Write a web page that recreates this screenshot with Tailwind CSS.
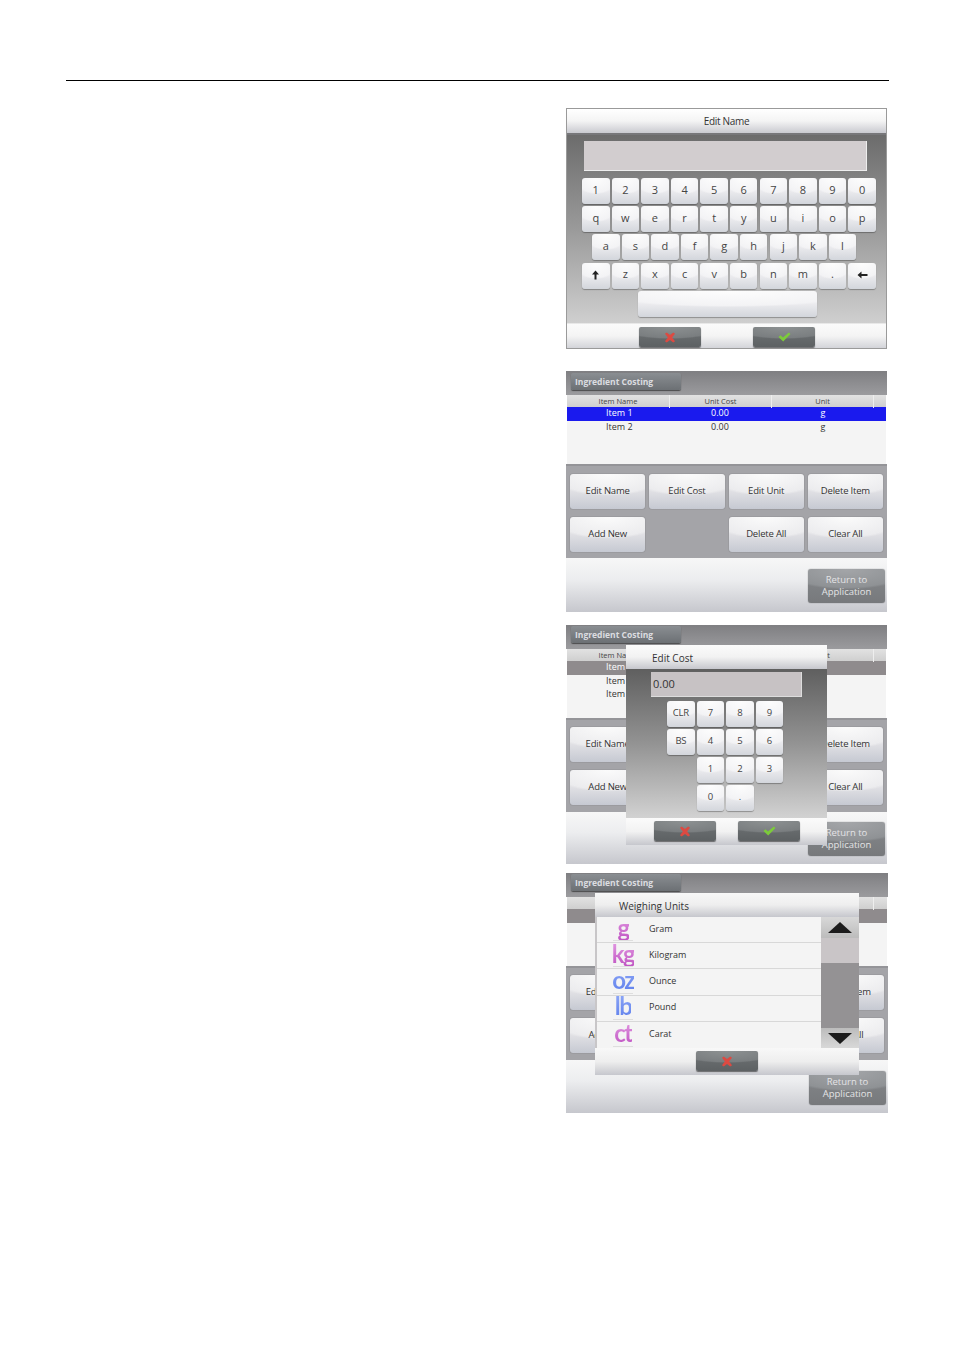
<!DOCTYPE html>
<html lang="en">
<head>
    <meta charset="UTF-8">
    <title>Ingredient Costing</title>
    <script src="https://cdn.jsdelivr.net/npm/@tailwindcss/browser@4"></script>
</head>
<body class="bg-white font-['Open_Sans',sans-serif] text-[#333]">
    <div class="pt-20 h-[1350px] overflow-hidden">
        <div class="ml-[66px] w-[823px] border-t border-black"></div>
        <div class="ml-[566px] w-[321px] mt-[27px] flex flex-col">

            <!-- Edit Name keyboard -->
            <section class="h-[241px] flex flex-col border border-[#9a9a9a]">
                <div class="h-[26px] pt-px flex items-center justify-center text-[10px] tracking-[-0.3px] bg-[linear-gradient(#ffffff,#f4f4f4_50%,#c9cad0)] border-b-2 border-[#77777a]">Edit Name</div>
                <div class="flex-1 px-[15px] pt-[6px] bg-[linear-gradient(#6c6c6c,#9a9a9a_50%,#cfcfcf)]">
                    <div class="h-[30px] mx-[2px] w-[283px] bg-[#d2cdcf] border-b border-r border-[#eeeeee]"></div>
                    <div id="kbd" class="mt-[7px] flex flex-col gap-[2.2px]"></div>
                </div>
                <div class="h-[25px] flex justify-center gap-[52px] pt-[3px] bg-[linear-gradient(#fbfbfb,#f4f4f4_50%,#d3d4d9)] border-t border-[#e8e8e8]">
                    <div class="action-x"></div>
                    <div class="action-ok"></div>
                </div>
            </section>

            <!-- Item list -->
            <section id="screen-list" class="relative mt-[22px] h-[241px]"></section>

            <!-- Edit Cost popup over the list -->
            <section id="screen-cost" class="relative mt-[13px] h-[239px]">
                <div class="absolute z-10 left-[60px] top-[20px] w-[201px] h-[200px] flex flex-col">
                    <div class="h-[24px] pl-[26px] pt-[2px] flex items-center text-[10px] bg-[linear-gradient(#fbfbfb,#f2f2f2_50%,#c6c7cd)]">Edit Cost</div>
                    <div class="flex-1 pt-[3px] bg-[linear-gradient(#5f5f5f,#939393_50%,#d2d2d2)]">
                        <div class="ml-[25px] w-[151px] h-[25px] pl-[2px] flex items-center text-[11px] bg-[#c7c2c4] border-b border-r border-[#dddddd]">0.00</div>
                        <div id="numpad" class="ml-[41px] mt-[4px] grid grid-cols-[repeat(4,27.5px)] auto-rows-[26px] gap-x-[2px] gap-y-[2px]"></div>
                    </div>
                    <div class="h-[27px] flex justify-center gap-[22px] pt-[3px] bg-[linear-gradient(#fbfbfb,#f2f2f2_50%,#c6c7cd)]">
                        <div class="action-x"></div>
                        <div class="action-ok"></div>
                    </div>
                </div>
            </section>

            <!-- Weighing Units popup over the list -->
            <section id="screen-units" class="relative mt-[9px] h-[240px] w-[322px]">
                <div class="absolute z-10 left-[29px] top-[20px] w-[264px] h-[182px] flex flex-col">
                    <div class="h-[24px] pl-[24px] pt-[2px] flex items-center text-[10px] bg-[linear-gradient(#f8f8f8,#eeeeee_50%,#c6c7cd)]">Weighing Units</div>
                    <div class="h-[131px] flex bg-[#c8c6c8]">
                        <ul id="units" class="w-[224px] ml-[2px] bg-[#f4f4f4] flex flex-col"></ul>
                        <div class="flex-1 flex flex-col bg-[#949294]">
                            <div class="h-[21px] flex items-center justify-center bg-[linear-gradient(#d8d8d8,#bcbcbc)]">
                                <div class="w-0 h-0 border-x-[12px] border-x-transparent border-b-[11px] border-b-[#1c1c1c]"></div>
                            </div>
                            <div class="h-[25px] bg-[#c9c5c7]"></div>
                            <div class="flex-1"></div>
                            <div class="h-[20px] flex items-center justify-center bg-[linear-gradient(#bcbcbc,#d8d8d8)]">
                                <div class="w-0 h-0 border-x-[12px] border-x-transparent border-t-[11px] border-t-[#1c1c1c]"></div>
                            </div>
                        </div>
                    </div>
                    <div class="flex-1 flex justify-center pt-[3px] bg-[linear-gradient(#f8f8f8,#eeeeee_50%,#c6c7cd)]">
                        <div class="action-x"></div>
                    </div>
                </div>
            </section>
        </div>
    </div>

    <script>
        const keyCls = 'shrink-0 pb-[2px] flex items-center justify-center rounded-[3px] text-[#444] bg-[radial-gradient(ellipse_80%_62%_at_50%_0,#fdfdfd,#f3f3f5_90%,transparent_100%),linear-gradient(#ebebee_50%,#d3d6dc)] shadow-[0_1px_1px_rgba(0,0,0,0.3)]';
        const btnCls = 'h-[34.5px] flex items-center justify-center rounded-[3px] text-[9.5px] tracking-[-0.2px] text-[#333] bg-[radial-gradient(ellipse_80%_62%_at_50%_0,#fbfbfb,#ececee_90%,transparent_100%),linear-gradient(#e0e0e4_50%,#c6c9d2)] shadow-[0_0_1px_rgba(0,0,0,0.5)]';
        const actionCls = 'w-[62px] h-[20px] flex items-center justify-center rounded-[2px] bg-[radial-gradient(ellipse_85%_60%_at_50%_0,#8d9192,#7a7e80_90%,transparent_100%),linear-gradient(#6f7375,#5d6163)] shadow-[0_1px_1px_rgba(0,0,0,0.5)]';

        const upArrow = '<svg width="9" height="10" viewBox="0 0 9 10"><path d="M4.5 0.5 L8 4.5 H5.5 V9.5 H3.5 V4.5 H1 Z" fill="#222"/></svg>';
        const backArrow = '<svg width="11" height="8" viewBox="0 0 11 8"><path d="M0.5 4 L4.5 0.5 V3 H10.5 V5 H4.5 V7.5 Z" fill="#222"/></svg>';
        const crossIcon = '<svg width="12" height="11" viewBox="0 0 13 12"><path d="M1 2 L3 0.5 L6.5 3.2 L10 0.5 L12 2 L8.8 6 L12 10 L10 11.5 L6.5 8.8 L3 11.5 L1 10 L4.2 6 Z" fill="#dc4a42"/></svg>';
        const checkIcon = '<svg class="ml-[2px]" width="13" height="10" viewBox="0 0 13 10"><path d="M0.5 5 L2.5 3.2 L5 5.4 L10.8 0.5 L12.5 2 L5.2 9.5 Z" fill="#7ccb3a"/></svg>';

        document.querySelectorAll('.action-x').forEach(el => {
            el.className = actionCls;
            el.innerHTML = crossIcon;
        });
        document.querySelectorAll('.action-ok').forEach(el => {
            el.className = actionCls;
            el.innerHTML = checkIcon;
        });

        // Keyboard rows
        const key = label => `<div class="${keyCls} text-[11px] w-[27.5px] h-[26px]">${label}</div>`;
        const rows = [
            ['1','2','3','4','5','6','7','8','9','0'],
            ['q','w','e','r','t','y','u','i','o','p'],
            ['a','s','d','f','g','h','j','k','l'],
            [upArrow,'z','x','c','v','b','n','m','.',backArrow]
        ];
        document.getElementById('kbd').innerHTML = rows.map((row, i) => `
            <div class="flex gap-[2.1px] ${i === 2 ? 'pl-[10px]' : ''}">${row.map(key).join('')}</div>
        `).join('') + `<div class="${keyCls} ml-[56px] w-[179px] h-[26px]"></div>`;

        // Numeric pad
        const pad = ['CLR','7','8','9','BS','4','5','6','','1','2','3','','0','.',''];
        document.getElementById('numpad').innerHTML = pad.map(p =>
            p ? `<div class="${keyCls} text-[9.5px] tracking-[-0.3px]">${p}</div>` : '<div></div>'
        ).join('');

        // Weighing units list
        const units = [
            ['g', 'Gram', 'bg-[linear-gradient(#e39ce3,#bf52c2)]'],
            ['kg', 'Kilogram', 'bg-[linear-gradient(#e39ce3,#bf52c2)]'],
            ['oz', 'Ounce', 'bg-[linear-gradient(#8fa8f7,#5f80ec)]'],
            ['lb', 'Pound', 'bg-[linear-gradient(#8fa8f7,#5f80ec)]'],
            ['ct', 'Carat', 'bg-[linear-gradient(#e39ce3,#bf52c2)]']
        ];
        document.getElementById('units').innerHTML = units.map(([sym, name, fill]) => `
            <li class="relative h-[26.2px] shrink-0 flex items-center border-b border-[#d8d8d8] last:border-b-0">
                <span class="w-[52px] -mt-[2px] text-center"><span class="inline-block font-['Lato',sans-serif] font-bold text-[24px] leading-[26px] tracking-[-1.5px] bg-clip-text text-transparent ${fill}">${sym}</span></span>
                <span class="text-[9px] -mt-[2px]">${name}</span>
                <span class="absolute left-[16px] bottom-[1px] w-[20px] h-px bg-[#dedede]"></span>
            </li>
        `).join('');

        // Shared Ingredient Costing screen
        function costing(id, names, rowBg, rowText, h, topPad, gridPad, returnPad) {
            const labels = ['Edit Name','Edit Cost','Edit Unit','Delete Item','Add New','','Delete All','Clear All'];
            const unitVals = id === 'screen-list' ? ['g','g'] : [];
            const html = `
                <div class="${h} flex flex-col">
                    <div class="h-[24px] pl-[5px] ${topPad} bg-[linear-gradient(#7f7f82,#9b9b9e)]">
                        <div class="w-[110px] h-[17px] pl-[4px] pt-px flex items-center text-[8.5px] font-bold text-[#dcdde0] rounded-[2px] bg-[linear-gradient(#8a8e92,#6c7074)] shadow-[0_1px_1px_rgba(0,0,0,0.5)]">Ingredient Costing</div>
                    </div>
                    <div class="h-[69px] mx-px bg-[#f4f4f4] relative">
                        <div class="h-[12px] grid grid-cols-[103px_102px_102px_1fr] text-[7.5px] text-[#444] bg-[linear-gradient(#e2e2e2,#cfcfcf)]">
                            <div class="text-center leading-[13px] border-r border-[#eeeeee]">Item Name</div>
                            <div class="text-center leading-[13px] border-r border-[#eeeeee]">Unit Cost</div>
                            <div class="text-center leading-[13px] border-r border-[#eeeeee]">Unit</div>
                            <div></div>
                        </div>
                        ${names.map((name, i) => `
                            <div class="h-[13.5px] grid grid-cols-[103px_102px_102px_1fr] text-[9px] leading-[11.5px] ${i === 0 ? rowBg + ' ' + rowText : 'text-[#333]'}">
                                <div class="pl-[39px]">${name}</div>
                                <div class="pl-[41px]">${unitVals.length ? '0.00' : ''}</div>
                                <div class="text-center">${unitVals[i] || ''}</div>
                            </div>`).join('')}
                    </div>
                    <div class="h-[94px] px-[4px] ${gridPad} grid grid-cols-4 gap-x-[4px] gap-y-[8.5px] content-start bg-[#a4a4a8] border-t-2 border-[#949498]">
                        ${labels.map(l => l ? `<div class="${btnCls}">${l}</div>` : '<div></div>').join('')}
                    </div>
                    <div class="flex-1 flex justify-end items-start pr-[2px] ${returnPad} bg-[linear-gradient(#f7f7f7,#ecedef_40%,#c6c7cd)]">
                        <div class="w-[77px] h-[34px] flex items-center justify-center text-center text-[9.5px] leading-[12px] text-[#e4e4e6] rounded-[3px] bg-[radial-gradient(ellipse_85%_60%_at_50%_0,#a4a6a9,#8f9295_90%,transparent_100%),linear-gradient(#85888b,#77797c)] shadow-[0_0_1px_rgba(0,0,0,0.6)]">Return to<br>Application</div>
                    </div>
                </div>`;
            document.getElementById(id).insertAdjacentHTML('beforeend', html);
        }
        costing('screen-list', ['Item 1','Item 2'], 'bg-[#1a1aee]', 'text-white', 'h-[241px]', 'pt-[2px]', 'pt-[8px]', 'pt-[11px]');
        costing('screen-cost', ['Item 1','Item 2','Item 3'], 'bg-[#8f8b8d]', 'text-white', 'h-[239px]', 'pt-[1px]', 'pt-[7px]', 'pt-[10px]');
        costing('screen-units', ['','',''], 'bg-[#8f8b8d]', 'text-white', 'h-[240px]', 'pt-[1px]', 'pt-[7px]', 'pt-[11px]');
    </script>
</body>
</html>
